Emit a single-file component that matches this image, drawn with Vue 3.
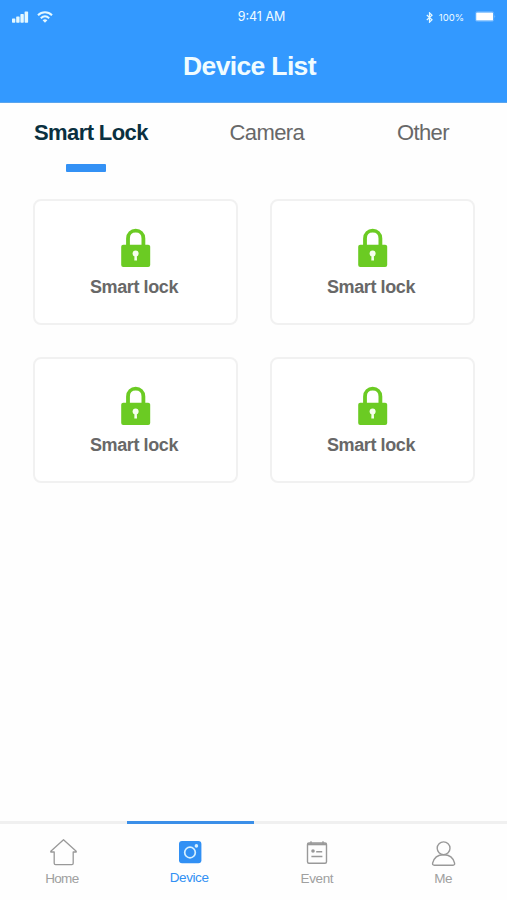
<template>
  <div class="page">
    <header class="header">
      <div class="status-bar">
        <div class="status-left">
          <svg class="signal" width="17" height="12" viewBox="0 0 17 12" fill="#e4f8ff">
            <rect x="0" y="7.4" width="3.3" height="4.4" rx="0.7" />
            <rect x="4.2" y="5.4" width="3.4" height="6.4" rx="0.7" />
            <rect x="8.4" y="3" width="3.4" height="8.8" rx="0.7" />
            <rect x="12.6" y="0.4" width="3.5" height="11.4" rx="0.7" />
          </svg>
          <svg class="wifi" width="16" height="12" viewBox="0 0 16 12" fill="none" stroke="#e4f8ff" stroke-width="2">
            <path d="M1 4.3C5 0.3 11 0.3 15 4.3" />
            <path d="M3.8 7.2C6.4 4.8 9.6 4.8 12.2 7.2" />
            <path d="M5.6 9.2Q8 7.2 10.4 9.2L8 11.8Z" fill="#e4f8ff" stroke="none" />
          </svg>
        </div>
        <span class="time">9:41 AM</span>
        <div class="status-right">
          <svg width="7" height="11" viewBox="0 0 7 11" fill="none" stroke="#e4f8ff" stroke-width="1.2">
            <path d="M0.8 3L6 7.8L3.5 10.2V0.8L6 3.2L0.8 8" />
          </svg>
          <span class="percent">100%</span>
          <svg class="battery" width="21" height="11" viewBox="0 0 21 11">
            <rect x="0.5" y="0.5" width="18.2" height="10" rx="1.8" fill="none" stroke="#66b3ff" stroke-width="0.8" />
            <rect x="1.2" y="1.4" width="16.8" height="8.2" rx="0.7" fill="#fff" />
            <path d="M19.6 4Q20.8 5.5 19.6 7Z" fill="#a5d4ff" />
          </svg>
        </div>
      </div>
      <h1 class="title">Device List</h1>
    </header>

    <nav class="tabs">
      <span v-for="tab in tabs" :key="tab" class="tab" :class="{ active: tab === activeTab }">{{ tab }}</span>
    </nav>

    <main class="device-grid">
      <div v-for="device in devices" :key="device.id" class="device-card">
        <svg class="lock" width="30" height="40" viewBox="0 0 30 40">
          <path d="M7 18V10.5C7 5.7 10.4 2.7 14.7 2.7S22.4 5.7 22.4 10.5V18" fill="none" stroke="#6bcb23" stroke-width="3.8" />
          <rect x="0.2" y="16.8" width="29" height="22.2" rx="2" fill="#6bcb23" />
          <circle cx="14.6" cy="25.5" r="3" fill="#f5ffed" />
          <path d="M13.5 26.5H15.8L16 32.6H13.3Z" fill="#f5ffed" />
        </svg>
        <span class="device-name">{{ device.name }}</span>
      </div>
    </main>

    <footer class="tab-bar">
      <div v-for="item in menus" :key="item.key" class="menu" :class="[item.key, { active: item.key === activeMenu }]">
        <svg v-if="item.key === 'home'" class="icon" width="28" height="28" viewBox="0 0 28 28" fill="none" stroke="#999" stroke-width="1.3" stroke-linejoin="round">
          <path d="M14.5 1.8L27.2 13.3V14H24.2V25.3Q24.2 26.6 22.9 26.6H6.5Q5.2 26.6 5.2 25.3V14H1.8V13.3Z" />
        </svg>
        <svg v-else-if="item.key === 'device'" class="icon" width="28" height="28" viewBox="0 0 28 28">
          <rect x="3" y="3" width="22.4" height="22.2" rx="3" fill="#3190f4" />
          <circle cx="14" cy="14.5" r="5.3" fill="none" stroke="#d6f0ff" stroke-width="1.7" />
          <circle cx="20.4" cy="7.9" r="1.8" fill="#d6f0ff" />
        </svg>
        <svg v-else-if="item.key === 'event'" class="icon" width="28" height="28" viewBox="0 0 28 28" fill="none" stroke="#999" stroke-width="1.4">
          <rect x="4.5" y="5" width="19" height="20.2" rx="1.5" />
          <path d="M4.5 6.3H23.5" stroke-width="2" />
          <path d="M8 3.2V6M20 3.2V6" />
          <circle cx="10" cy="13" r="1.8" fill="#999" stroke="none" />
          <path d="M13.2 13.8H19.2M8.4 18.5H19.4" />
        </svg>
        <svg v-else class="icon" width="28" height="28" viewBox="0 0 28 28" fill="none" stroke="#999" stroke-width="1.4">
          <circle cx="13.6" cy="10.3" r="6.4" />
          <path d="M4.1 27.2Q2.4 27.2 2.6 25.2C3.8 19.9 7.8 16.7 13.6 16.7S23.4 19.9 24.6 25.2Q24.8 27.2 23.1 27.2Z" />
        </svg>
        <span class="menu-text">{{ item.label }}</span>
      </div>
    </footer>
  </div>
</template>

<script setup>
import { ref } from 'vue'

const tabs = ['Smart Lock', 'Camera', 'Other']
const activeTab = ref('Smart Lock')

const devices = ref([
  { id: 1, name: 'Smart lock' },
  { id: 2, name: 'Smart lock' },
  { id: 3, name: 'Smart lock' },
  { id: 4, name: 'Smart lock' }
])

const menus = [
  { key: 'home', label: 'Home' },
  { key: 'device', label: 'Device' },
  { key: 'event', label: 'Event' },
  { key: 'me', label: 'Me' }
]
const activeMenu = ref('device')
</script>

<style>
body {
  margin: 0;
  background: #fefefe;
}
</style>

<style scoped>
.page {
  display: flex;
  flex-direction: column;
  height: 900px;
  overflow: hidden;
  background: #fefefe;
  font-family: "Liberation Sans", Arial, sans-serif;
}

.header {
  height: 103px;
  flex-shrink: 0;
  box-sizing: border-box;
  border-bottom: 1px solid #5aa5ee;
  background: #3399ff;
  color: #f0fcff;
}

.status-bar {
  display: grid;
  grid-template-columns: 1fr auto 1fr;
  align-items: center;
  height: 32px;
  padding: 0 11px 0 12px;
}

.status-left {
  display: flex;
  align-items: center;
  gap: 8px;
}

.time {
  padding-left: 15px;
  font-family: Inter, sans-serif;
  font-size: 12.5px;
  line-height: 34px;
}

.status-right {
  display: flex;
  align-items: center;
  justify-content: flex-end;
}

.percent {
  margin: 0 11px 0 6px;
  font-family: Inter, sans-serif;
  font-size: 9.5px;
}

.battery {
  margin-bottom: 2px;
}

.title {
  margin: 17px 0 0;
  padding-right: 8px;
  font-size: 26.5px;
  line-height: 34px;
  letter-spacing: -0.65px;
  text-align: center;
}

.tabs {
  display: flex;
  height: 96px;
  flex-shrink: 0;
  box-sizing: border-box;
  padding: 16px 58px 0 34px;
  justify-content: space-between;
}

.tab {
  display: flex;
  flex-direction: column;
  align-items: center;
  font-size: 22px;
  line-height: 28px;
  letter-spacing: -0.6px;
  color: #686868;
}

.tab.active {
  margin-right: -11px;
  font-weight: bold;
  color: #0a3040;
}

.tab.active::after {
  content: "";
  width: 40px;
  height: 8px;
  margin: 17px 9px 0 0;
  border-radius: 1px;
  background: #3391f5;
}

.device-grid {
  display: grid;
  grid-template-columns: 205px 205px;
  grid-auto-rows: 126px;
  gap: 32px;
  flex: 1;
  align-content: start;
  padding-left: 33px;
}

.device-card {
  display: flex;
  flex-direction: column;
  align-items: center;
  box-sizing: border-box;
  border: 2px solid #f1f1f1;
  border-radius: 8px;
  padding-top: 27px;
  background: #fff;
}

.device-name {
  margin-top: 7px;
  padding-right: 3px;
  font-size: 18px;
  font-weight: bold;
  line-height: 24px;
  letter-spacing: -0.4px;
  color: #686868;
}

.tab-bar {
  display: grid;
  grid-template-columns: repeat(4, 1fr);
  height: 79px;
  flex-shrink: 0;
}

.menu {
  display: flex;
  flex-direction: column;
  align-items: center;
  box-sizing: border-box;
  border-top: 3px solid #f0f0f0;
  padding-top: 14px;
  color: #a0a0a0;
}

.menu.active {
  border-top-color: #3b8fe8;
  color: #3190f4;
}

.menu-text {
  margin-top: 5px;
  font-size: 13.5px;
  line-height: 16px;
  letter-spacing: -0.4px;
}

.active .menu-text {
  margin-top: 4px;
  padding-right: 2px;
}

.home .menu-text {
  padding-right: 3px;
  letter-spacing: -0.7px;
}

.me .menu-text {
  padding-right: 1px;
}
</style>
